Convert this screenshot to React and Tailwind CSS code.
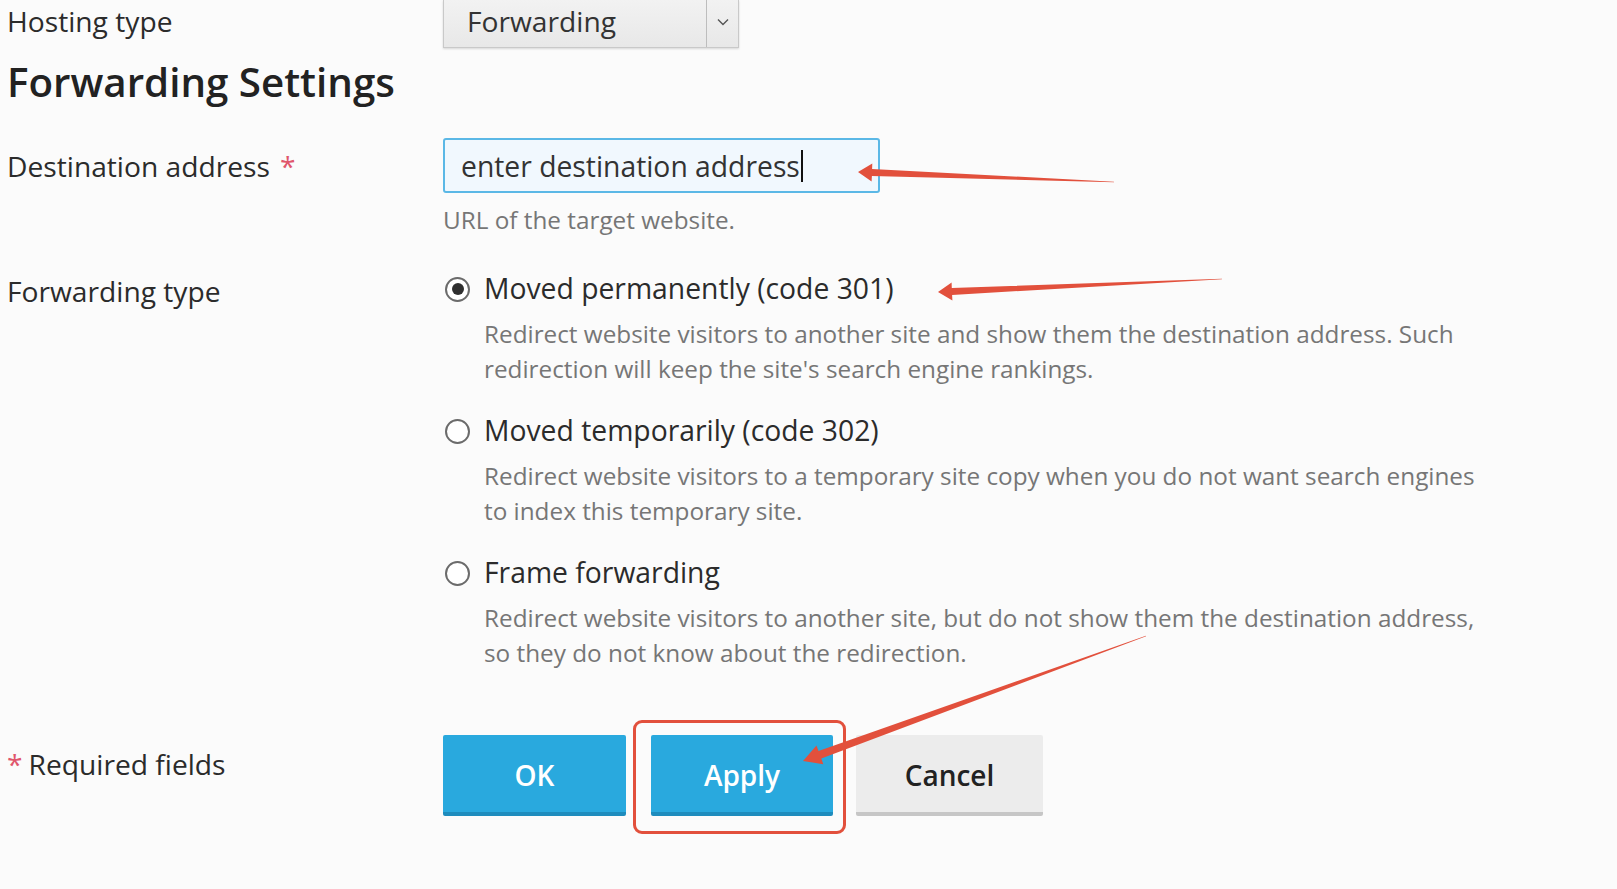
import React from "react";

function arrowPoints(tail, tip, headLen, headHalf, shaftNear, shaftTail) {
  const dx = tip[0] - tail[0];
  const dy = tip[1] - tail[1];
  const len = Math.hypot(dx, dy);
  const ux = dx / len, uy = dy / len;
  const nx = -uy, ny = ux;
  const bx = tip[0] - ux * headLen, by = tip[1] - uy * headLen;
  const pts = [
    [tail[0] + nx * shaftTail, tail[1] + ny * shaftTail],
    [bx + nx * shaftNear, by + ny * shaftNear],
    [bx + nx * headHalf, by + ny * headHalf],
    [tip[0], tip[1]],
    [bx - nx * headHalf, by - ny * headHalf],
    [bx - nx * shaftNear, by - ny * shaftNear],
    [tail[0] - nx * shaftTail, tail[1] - ny * shaftTail],
  ];
  return pts.map((p) => p[0].toFixed(1) + "," + p[1].toFixed(1)).join(" ");
}

function Radio({ checked }) {
  return (
    <div className="h-[40px] flex items-center shrink-0 ml-[2px]">
      <div className="w-[25px] h-[25px] rounded-full border-2 border-[#6b6b6b] bg-white flex items-center justify-center">
        {checked && <div className="w-[12px] h-[12px] rounded-full bg-[#2f2f2f]" />}
      </div>
    </div>
  );
}

function Option({ checked, label, lines }) {
  return (
    <div className="flex flex-col">
      <div className="flex items-start">
        <Radio checked={checked} />
        <div className="ml-[14px] -mt-[1px] text-[28.3px] leading-[40px] text-[#2b2b2b] whitespace-nowrap">{label}</div>
      </div>
      <div className="mt-[7px] pl-[41px] text-[24.3px] leading-[35px] text-[#767676] whitespace-nowrap">
        {lines.map((l, i) => (
          <div key={i}>{l}</div>
        ))}
      </div>
    </div>
  );
}

export default function App() {
  return (
    <div className="relative w-full h-[889px] overflow-hidden bg-[#fbfbfb] font-['Open_Sans',sans-serif] text-[#2b2b2b]">
      <div className="pl-[7px]">
        {/* Hosting type row */}
        <div className="flex items-center h-[48px]">
          <div className="w-[436px] text-[28.2px] leading-[40px] -mt-[6px]">Hosting type</div>
          <div className="w-[296px] h-[48px] flex border border-t-0 border-[#c9c9c9] bg-gradient-to-b from-[#f2f2f2] to-[#e8e8e8] shadow-[0_1px_2px_rgba(0,0,0,0.15)]">
            <div className="flex-1 pl-[23px] flex items-center text-[28.2px] leading-[40px] text-[#333] -mt-[5px]">Forwarding</div>
            <div className="w-[32px] border-l border-[#bdbdbd] flex items-center justify-center">
              <svg width="12" height="8" viewBox="0 0 12 8" className="-mt-[4px]">
                <polyline points="1,1.5 6,6.5 11,1.5" fill="none" stroke="#555" strokeWidth="1.4" />
              </svg>
            </div>
          </div>
        </div>

        {/* Heading */}
        <div className="mt-[10px] h-[48px] leading-[48px] text-[40.3px] font-semibold text-[#222]">Forwarding Settings</div>

        {/* Destination address */}
        <div className="mt-[32px] flex">
          <div className="w-[436px] h-[55px] flex items-center text-[28.2px] leading-[40px]">
            Destination address<span className="text-[#e0566c] ml-[10px]">*</span>
          </div>
          <div className="w-[437px] h-[55px] border-2 border-[#5bb8e6] rounded-[3px] bg-[#f1f8fe] flex items-center pl-[16px] text-[28.3px] leading-[40px] text-[#333]">
            enter destination address
            <span className="inline-block w-[2px] h-[32px] bg-[#111] ml-[1px]" />
          </div>
        </div>
        <div className="ml-[436px] mt-[11px] text-[24.3px] leading-[32px] text-[#767676]">URL of the target website.</div>

        {/* Forwarding type */}
        <div className="mt-[33px] flex">
          <div className="w-[436px] text-[28.2px] leading-[40px] mt-[2px]">Forwarding type</div>
          <div className="flex flex-col gap-[25px]">
            <Option
              checked
              label="Moved permanently (code 301)"
              lines={[
                "Redirect website visitors to another site and show them the destination address. Such",
                "redirection will keep the site's search engine rankings.",
              ]}
            />
            <Option
              label="Moved temporarily (code 302)"
              lines={[
                "Redirect website visitors to a temporary site copy when you do not want search engines",
                "to index this temporary site.",
              ]}
            />
            <Option
              label="Frame forwarding"
              lines={[
                "Redirect website visitors to another site, but do not show them the destination address,",
                "so they do not know about the redirection.",
              ]}
            />
          </div>
        </div>

        {/* Buttons */}
        <div className="mt-[65px] flex">
          <div className="w-[436px] mt-[9px] text-[28.2px] leading-[40px] h-[40px]">
            <span className="text-[#e0566c] mr-[6px]">*</span>Required fields
          </div>
          <div className="flex">
            <button className="w-[183px] h-[81px] pt-[3px] bg-[#29a9de] border-b-4 border-[#1e8cbd] rounded-[2px] text-white text-[28px] font-semibold">OK</button>
            <button className="ml-[25px] w-[182px] h-[81px] pt-[3px] bg-[#29a9de] border-b-4 border-[#1e8cbd] rounded-[2px] text-white text-[28px] font-semibold">Apply</button>
            <button className="ml-[23px] w-[187px] h-[81px] pt-[3px] bg-[#ececec] border-b-4 border-[#c6c6c6] rounded-[2px] text-[#222] text-[28px] font-semibold">Cancel</button>
          </div>
        </div>
      </div>

      {/* Annotations */}
      <div className="absolute left-[633px] top-[720px] w-[213px] h-[114px] border-[3px] border-[#e2503c] rounded-[9px]" />
      <svg className="absolute inset-0 pointer-events-none" width="1617" height="889">
        <polygon points={arrowPoints([1114, 182], [858, 172], 14, 9, 3.5, 0.3)} fill="#e2503c" />
        <polygon points={arrowPoints([1222, 279], [938, 292], 14, 9, 3.5, 0.3)} fill="#e2503c" />
        <polygon points={arrowPoints([1146, 636], [803, 761], 18, 10, 4, 0.3)} fill="#e2503c" />
      </svg>
    </div>
  );
}
